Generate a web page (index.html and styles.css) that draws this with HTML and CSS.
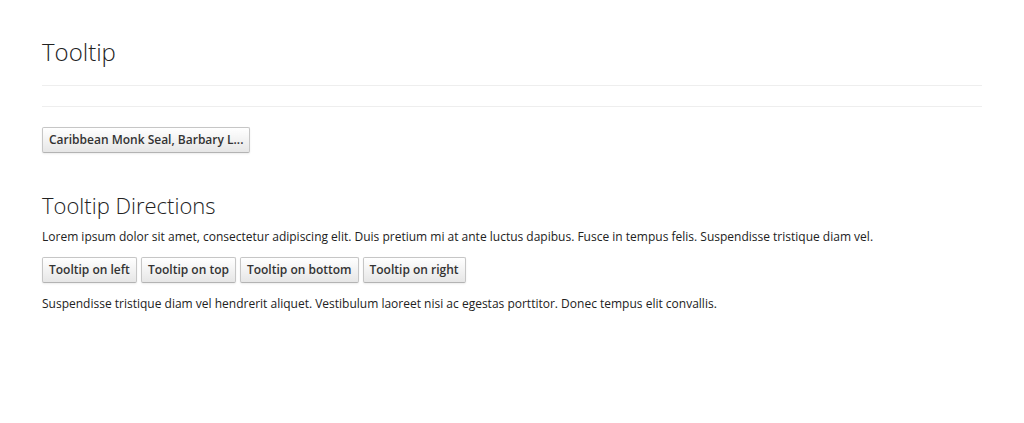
FILE: index.html
```html
<!DOCTYPE html>
<html>
<head>
<meta charset="utf-8">
<link rel="stylesheet" href="styles.css">
</head>
<body>
<div class="container">
  <div class="page-header">
    <h1 class="title">Tooltip</h1>
  </div>
  <hr class="rule">
  <div class="demo">
    <button class="btn">Caribbean Monk Seal, Barbary L...</button>
  </div>
  <h2 class="subtitle">Tooltip Directions</h2>
  <p class="text">Lorem ipsum dolor sit amet, consectetur adipiscing elit. Duis pretium mi at ante luctus dapibus. Fusce in tempus felis. Suspendisse tristique diam vel.</p>
  <div class="btn-row">
    <button class="btn">Tooltip on left</button>
    <button class="btn">Tooltip on top</button>
    <button class="btn">Tooltip on bottom</button>
    <button class="btn">Tooltip on right</button>
  </div>
  <p class="text">Suspendisse tristique diam vel hendrerit aliquet. Vestibulum laoreet nisi ac egestas porttitor. Donec tempus elit convallis.</p>
</div>
</body>
</html>
```

FILE: styles.css
```css
html, body {
  margin: 0;
  padding: 0;
  background: #ffffff;
}
body {
  font-family: "Open Sans", "Liberation Sans", sans-serif;
  font-size: 12px;
  line-height: 18px;
  color: #222222;
}
.container {
  width: 940px;
  margin-left: 42px;
  padding-top: 34px;
}
.page-header {
  border-bottom: 1px solid #eeeeee;
  padding-bottom: 15px;
}
.title {
  margin: 0;
  font-size: 24px;
  font-weight: 300;
  line-height: 36px;
  color: #222222;
}
.rule {
  margin: 20px 0 0 0;
  border: 0;
  border-top: 1px solid #eeeeee;
  height: 0;
}
.demo {
  margin-top: 20px;
}
.btn {
  font-family: "Open Sans", "Liberation Sans", sans-serif;
  font-size: 12px;
  font-weight: 600;
  line-height: 18px;
  color: #333333;
  padding: 3px 6px;
  border: 1px solid #c6c6c6;
  border-bottom-color: #b3b3b3;
  border-radius: 2px;
  background: linear-gradient(#ffffff, #e6e6e6);
  box-shadow: 0 1px 2px rgba(0,0,0,0.08);
  margin: 0;
  cursor: pointer;
}
.subtitle {
  margin: 37px 0 8px 0;
  font-size: 22px;
  font-weight: 300;
  line-height: 30px;
  color: #222222;
}
.text {
  margin: 0;
}
.btn-row {
  display: flex;
  gap: 4px;
  margin: 11px 0 12px 0;
}
```
